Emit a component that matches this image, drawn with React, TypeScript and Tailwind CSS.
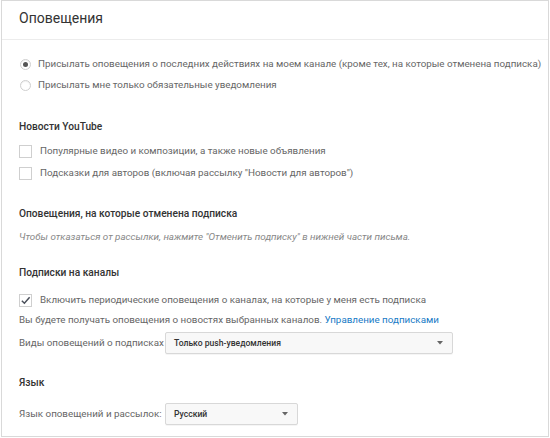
import React from "react";

function Radio({ checked }: { checked?: boolean }) {
  return (
    <span className="w-[11px] h-[11px] rounded-full border border-[#cfcfcf] bg-white flex items-center justify-center shrink-0 shadow-[inset_0_1px_1px_rgba(0,0,0,0.06)]">
      {checked && <span className="w-[5px] h-[5px] rounded-full bg-[#555]" />}
    </span>
  );
}

function Check({ checked }: { checked?: boolean }) {
  return (
    <span className="w-[13px] h-[13px] border border-[#cfcfcf] bg-white flex items-center justify-center shrink-0">
      {checked && (
        <svg width="11" height="11" viewBox="0 0 12 12">
          <path d="M2 6.3 L4.8 9 L10.5 2.4" fill="none" stroke="#4a4f5a" strokeWidth="1.6" />
        </svg>
      )}
    </span>
  );
}

function Select({ label, width }: { label: string; width: string }) {
  return (
    <div className={`${width} h-[22px] border border-[#d8d8d8] bg-[#f8f8f8] rounded-[2px] flex items-center justify-between pl-[8px] pr-[9px] shadow-[0_1px_0_rgba(0,0,0,0.04)]`}>
      <span className="text-[8.6px] font-medium text-[#333]">{label}</span>
      <svg width="6" height="4" viewBox="0 0 6 4">
        <path d="M0 0 L6 0 L3 3.5 Z" fill="#666" />
      </svg>
    </div>
  );
}

export default function App() {
  return (
    <div className="w-[550px] h-[438px] bg-white" style={{ fontFamily: "Roboto, 'Liberation Sans', sans-serif" }}>
      <div className="ml-[1px] w-[548px] h-[437px] border border-[#d9d9d9] text-[9.8px] text-[#666]">
        <div className="h-[39px] border-b border-[#ececec] pl-[17px] pt-[7px]">
          <h1 className="text-[14px] text-[#333] font-normal leading-[20px]">Оповещения</h1>
        </div>
        <div className="pl-[17px]">
          <label className="mt-[17px] flex items-center gap-[7px] pl-[1px] h-[14px] leading-[14px]">
            <Radio checked />
            <span>Присылать оповещения о последних действиях на моем канале (кроме тех, на которые отменена подписка)</span>
          </label>
          <label className="mt-[7px] flex items-center gap-[7px] pl-[1px] h-[14px] leading-[14px]">
            <Radio />
            <span>Присылать мне только обязательные уведомления</span>
          </label>

          <h2 className="mt-[28px] text-[10.2px] font-medium text-[#333] leading-[14px]">Новости YouTube</h2>
          <label className="mt-[10px] flex items-center gap-[8px] h-[14px] leading-[14px]">
            <Check />
            <span>Популярные видео и композиции, а также новые объявления</span>
          </label>
          <label className="mt-[8px] flex items-center gap-[8px] h-[14px] leading-[14px]">
            <Check />
            <span>Подсказки для авторов (включая рассылку "Новости для авторов")</span>
          </label>

          <h2 className="mt-[27px] text-[10.2px] font-medium text-[#333] leading-[14px]">Оповещения, на которые отменена подписка</h2>
          <p className="mt-[9px] italic text-[9.8px] text-[#888] leading-[14px]">
            Чтобы отказаться от рассылки, нажмите "Отменить подписку" в нижней части письма.
          </p>

          <h2 className="mt-[22px] text-[10.2px] font-medium text-[#333] leading-[14px]">Подписки на каналы</h2>
          <label className="mt-[13px] flex items-center gap-[8px] h-[14px] leading-[14px]">
            <Check checked />
            <span>Включить периодические оповещения о каналах, на которые у меня есть подписка</span>
          </label>
          <p className="mt-[6px] leading-[14px]">
            Вы будете получать оповещения о новостях выбранных каналов.{" "}
            <a className="text-[#167ac6]">Управление подписками</a>
          </p>
          <div className="mt-[5px] flex items-center h-[22px]">
            <span className="w-[146px] shrink-0">Виды оповещений о подписках</span>
            <Select label="Только push-уведомления" width="w-[288px]" />
          </div>

          <h2 className="mt-[22px] text-[10.2px] font-medium text-[#333] leading-[14px]">Язык</h2>
          <div className="mt-[13px] flex items-center h-[22px]">
            <span className="w-[146px] shrink-0">Язык оповещений и рассылок:</span>
            <Select label="Русский" width="w-[133px]" />
          </div>
        </div>
      </div>
    </div>
  );
}
